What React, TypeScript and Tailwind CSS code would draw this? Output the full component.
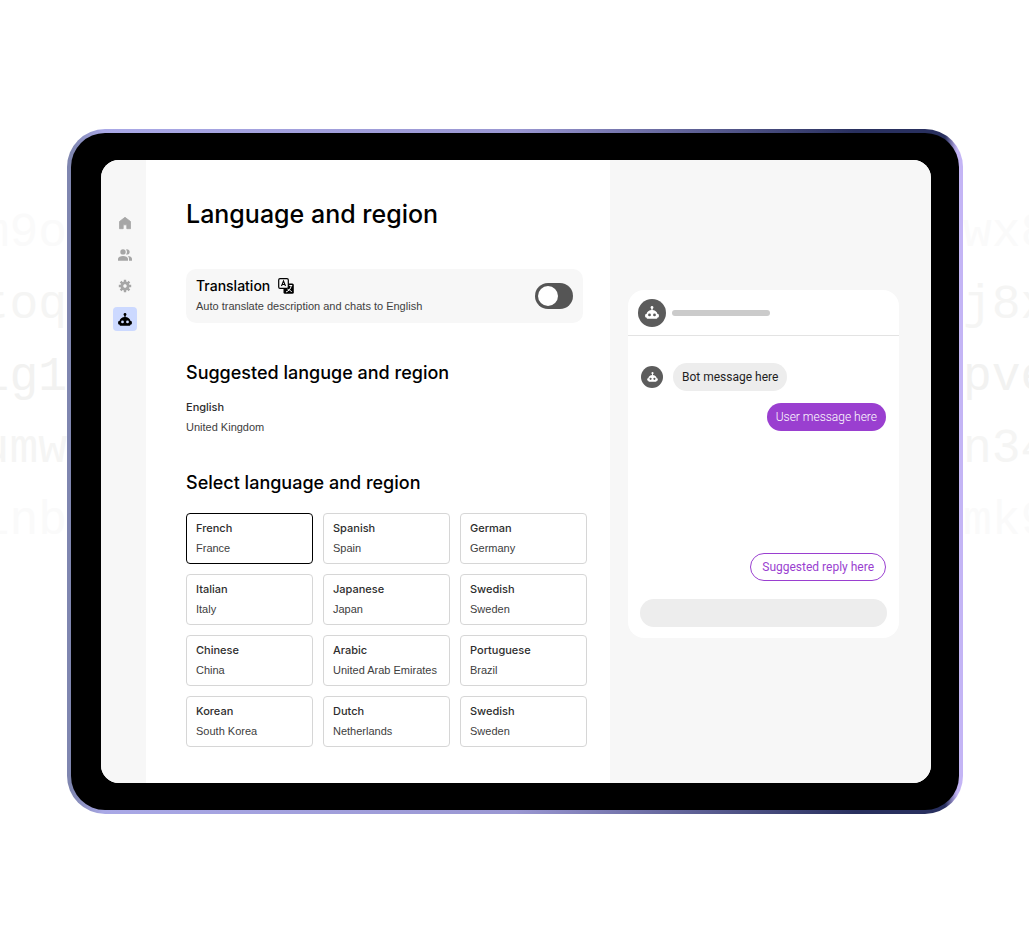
import { useState } from "react";

const languages = [
  ["French", "France"],
  ["Spanish", "Spain"],
  ["German", "Germany"],
  ["Italian", "Italy"],
  ["Japanese", "Japan"],
  ["Swedish", "Sweden"],
  ["Chinese", "China"],
  ["Arabic", "United Arab Emirates"],
  ["Portuguese", "Brazil"],
  ["Korean", "South Korea"],
  ["Dutch", "Netherlands"],
  ["Swedish", "Sweden"],
];

function RobotIcon({ className }: { className: string }) {
  return (
    <svg viewBox="0 0 14 13" className={className} fill="currentColor" aria-hidden="true">
      <circle cx="7" cy="1.5" r="1.4" />
      <path d="M6.4 2h1.2v3H6.4z" />
      <path
        fillRule="evenodd"
        d="M7 4C4 4 1.8 5.800 1.500 8C.7 8 .1 8.500.1 9.300v.9c0 .8.5 1.300 1.300 1.300.2.9.7 1.300 1.500 1.300h8.200c.8 0 1.300-.4 1.500-1.300.8 0 1.300-.5 1.300-1.300v-.9c0-.8-.6-1.300-1.400-1.300C12.200 5.800 10 4 7 4zM4.500 7.500a1.400 1.400 0 1 1 0 2.800 1.400 1.400 0 0 1 0-2.800zm5 0a1.400 1.400 0 1 1 0 2.800 1.400 1.400 0 0 1 0-2.800z"
      />
    </svg>
  );
}

function HomeIcon() {
  return (
    <svg viewBox="0 0 14 14" className="size-3.5" fill="currentColor" aria-hidden="true">
      <path
        d="M7 1.300 1.500 5.500v7.200h3.700V8.800h3.600v3.900h3.700V5.500z"
        stroke="currentColor"
        strokeWidth=".8"
        strokeLinejoin="round"
      />
    </svg>
  );
}

function PeopleIcon() {
  return (
    <svg viewBox="0 0 14 12" className="h-3 w-3.5" fill="currentColor" aria-hidden="true">
      <circle cx="5" cy="2.900" r="2.700" />
      <path d="M0 11.700V9.800C0 7.900 2.500 6.900 5 6.900s5 1 5 2.900v1.900zM8 5.400a4 4 0 0 0 0-5 2.700 2.700 0 1 1 0 5zM11 11.700V9.800c0-1.100-.5-2-1.300-2.700 2.300.2 4.300 1.200 4.300 2.700v1.900z" />
    </svg>
  );
}

function GearIcon() {
  return (
    <svg viewBox="0 0 14 14" className="size-3.5" aria-hidden="true">
      <path
        d="M7 .8v12.400M.8 7h12.400M2.600 2.600l8.800 8.800M11.400 2.600l-8.800 8.800"
        stroke="currentColor"
        strokeWidth="2.400"
        mask="url(#gear-hole)"
      />
      <circle cx="7" cy="7" r="3.200" fill="none" stroke="currentColor" strokeWidth="2.600" />
      <mask id="gear-hole" maskUnits="userSpaceOnUse" x="0" y="0" width="14" height="14">
        <rect width="14" height="14" fill="white" />
        <circle cx="7" cy="7" r="2" fill="black" />
      </mask>
    </svg>
  );
}

function TranslateIcon() {
  return (
    <svg viewBox="0 0 16 16" className="size-4" fill="none" aria-hidden="true">
      <rect x="5.500" y="5.500" width="10.300" height="10.300" rx="1.500" fill="black" />
      <rect x=".7" y=".7" width="9.600" height="9.600" rx="1.300" fill="#f7f7f7" stroke="black" strokeWidth="1.200" />
      <path d="M3.500 8 5.500 3l2 5M4.200 6.500h2.600" stroke="black" strokeWidth="1.100" />
      <path d="M11.300 7.500h2.900M13.200 8c-.6 2.900-2.300 4.900-5.200 6M9.500 11.200c1.300.3 3.200 1.300 4.200 2.700" stroke="white" strokeWidth="1" />
    </svg>
  );
}

function CodeColumn({ rows, side }: { rows: string[]; side: "left" | "right" }) {
  const tones = ["text-[#fafafa]", "text-[#f5f5f4]", "text-[#f2f2f1]", "text-[#f5f5f4]", "text-[#fafafa]"];
  return (
    <div
      aria-hidden="true"
      className={
        side === "left"
          ? "flex w-[67px] shrink-0 flex-col items-end overflow-hidden pt-[68px] font-['Liberation_Mono',monospace] text-5xl leading-[72px]"
          : "flex w-[66px] shrink-0 flex-col items-start overflow-hidden pt-[68px] font-['Liberation_Mono',monospace] text-5xl leading-[72px]"
      }
    >
      {rows.map((row, i) => (
        <span key={row} className={tones[i]}>
          {row}
        </span>
      ))}
    </div>
  );
}

function Sidebar() {
  return (
    <nav aria-label="Main" className="flex w-[45px] shrink-0 flex-col items-center bg-[#f7f7f7] pt-[56px] text-[#a6a6a6]">
      <a href="#home" aria-label="Home" className="flex h-[31px] items-start pl-0.5">
        <HomeIcon />
      </a>
      <a href="#people" aria-label="People" className="flex h-[32px] items-start pt-0.5 pl-0.5">
        <PeopleIcon />
      </a>
      <a href="#settings" aria-label="Settings" className="flex h-[28px] items-start pl-0.5">
        <GearIcon />
      </a>
      <a
        href="#bot"
        aria-label="Bot"
        aria-current="page"
        className="ml-0.5 flex size-6 items-center justify-center rounded bg-[#ccd9ff] text-black"
      >
        <RobotIcon className="h-[13px] w-3.5" />
      </a>
    </nav>
  );
}

function Chat() {
  return (
    <aside className="w-[321px] shrink-0 bg-[#f7f7f7] pt-[130px] pr-8 pl-[18px]">
      <div className="rounded-2xl bg-white pb-[11px]">
        <div className="flex h-[46px] items-center gap-1.5 border-b border-[#e3e3e3] pl-2.5">
          <span className="flex size-7 items-center justify-center rounded-full bg-[#5c5c5c] text-white">
            <RobotIcon className="h-[13px] w-3.5" />
          </span>
          <span className="h-1.5 w-[98px] rounded-full bg-[#cbcbcb]" />
        </div>
        <div className="flex flex-col px-[13px] pt-[27px] font-[Roboto,sans-serif] text-xs leading-4">
          <div className="flex items-center gap-2.5">
            <span className="flex size-[22px] items-center justify-center rounded-full bg-[#5c5c5c] text-white">
              <RobotIcon className="h-[10px] w-[11px]" />
            </span>
            <p className="rounded-full bg-[#ededed] px-[9px] py-1.5 text-[#1f1f1f]">Bot message here</p>
          </div>
          <p className="mt-3 self-end rounded-full bg-[#9a3fd0] px-[9px] py-1.5 font-light text-white">User message here</p>
          <button
            type="button"
            className="mt-[122px] self-end rounded-full border border-[#9a3fd0] px-[11px] py-[5px] text-[#9a3fd0]"
          >
            Suggested reply here
          </button>
        </div>
        <div className="mt-[18px] px-3">
          <input aria-label="Message" className="block h-7 w-full rounded-full bg-[#ededed] px-3 text-xs outline-none" />
        </div>
      </div>
    </aside>
  );
}

export default function App() {
  const [selected, setSelected] = useState(0);
  const [translate, setTranslate] = useState(false);

  return (
    <div className="flex min-h-screen items-center bg-white pb-0.5 font-[Inter,sans-serif] text-black">
      <div className="flex w-full items-start">
        <CodeColumn side="left" rows={["m9o", "toq", "lg1", "umw", "inb"]} />
        <div className="min-w-0 flex-1 rounded-[38px] bg-[linear-gradient(90deg,#7f86b0_0px,#7f86b0_4px,#a9a8e6_36px,#9a97d2_50%,#29305f_88%,#29305f_calc(100%-18px),#c4b5f5_calc(100%-6px))] p-1">
          <div className="rounded-[34px] bg-black py-[27px] pr-7 pl-[30px]">
            <div className="flex overflow-hidden rounded-[18px] bg-white">
              <Sidebar />
              <main className="min-w-0 flex-1 pt-9 pr-[23px] pb-9 pl-10">
                <h1 className="text-[25px] leading-9 font-medium">Language and region</h1>
                <section className="mt-[37px] mr-1 flex items-center justify-between rounded-[10px] bg-[#f7f7f7] pt-[7px] pr-2.5 pb-2 pl-2.5">
                  <div>
                    <h2 className="flex items-center gap-2 text-sm leading-5 font-medium">
                      Translation
                      <TranslateIcon />
                    </h2>
                    <p
                      id="translate-note"
                      className="pt-px font-['Liberation_Sans',sans-serif] text-[11px] leading-[18px] text-[#404040]"
                    >
                      Auto translate description and chats to English
                    </p>
                  </div>
                  <label className="flex cursor-pointer">
                    <input
                      type="checkbox"
                      role="switch"
                      aria-label="Auto translate"
                      aria-describedby="translate-note"
                      className="peer sr-only"
                      checked={translate}
                      onChange={() => setTranslate(!translate)}
                    />
                    <span className="flex h-[26px] w-[38px] items-center rounded-full bg-[#555] p-[3px] peer-checked:justify-end">
                      <span className="size-5 rounded-full bg-white" />
                    </span>
                  </label>
                </section>
                <section className="mt-9">
                  <h2 className="text-lg leading-7 font-medium">Suggested languge and region</h2>
                  <p className="mt-2.5 text-[11px] leading-5 font-medium text-[#2e2e2e]">English</p>
                  <p className="font-['Liberation_Sans',sans-serif] text-[11px] leading-5 text-[#404040]">United Kingdom</p>
                </section>
                <section className="mt-8">
                  <h2 className="text-lg leading-7 font-medium">Select language and region</h2>
                  <div className="mt-4 grid grid-cols-3 gap-2.5">
                    {languages.map(([language, region], i) => (
                      <button
                        key={i}
                        type="button"
                        aria-pressed={selected === i}
                        onClick={() => setSelected(i)}
                        className={
                          selected === i
                            ? "min-h-[51px] rounded border border-black px-[9px] pb-0.5 text-left text-[11px] leading-5 whitespace-nowrap"
                            : "min-h-[51px] rounded border border-[#d6d6d6] px-[9px] pb-0.5 text-left text-[11px] leading-5 whitespace-nowrap"
                        }
                      >
                        <span className="block font-medium text-[#2e2e2e]">{language}</span>
                        <span className="block font-['Liberation_Sans',sans-serif] text-[#404040]">{region}</span>
                      </button>
                    ))}
                  </div>
                </section>
              </main>
              <Chat />
            </div>
          </div>
        </div>
        <CodeColumn side="right" rows={["wx8", "j8x", "pve", "n34", "mk9"]} />
      </div>
    </div>
  );
}
